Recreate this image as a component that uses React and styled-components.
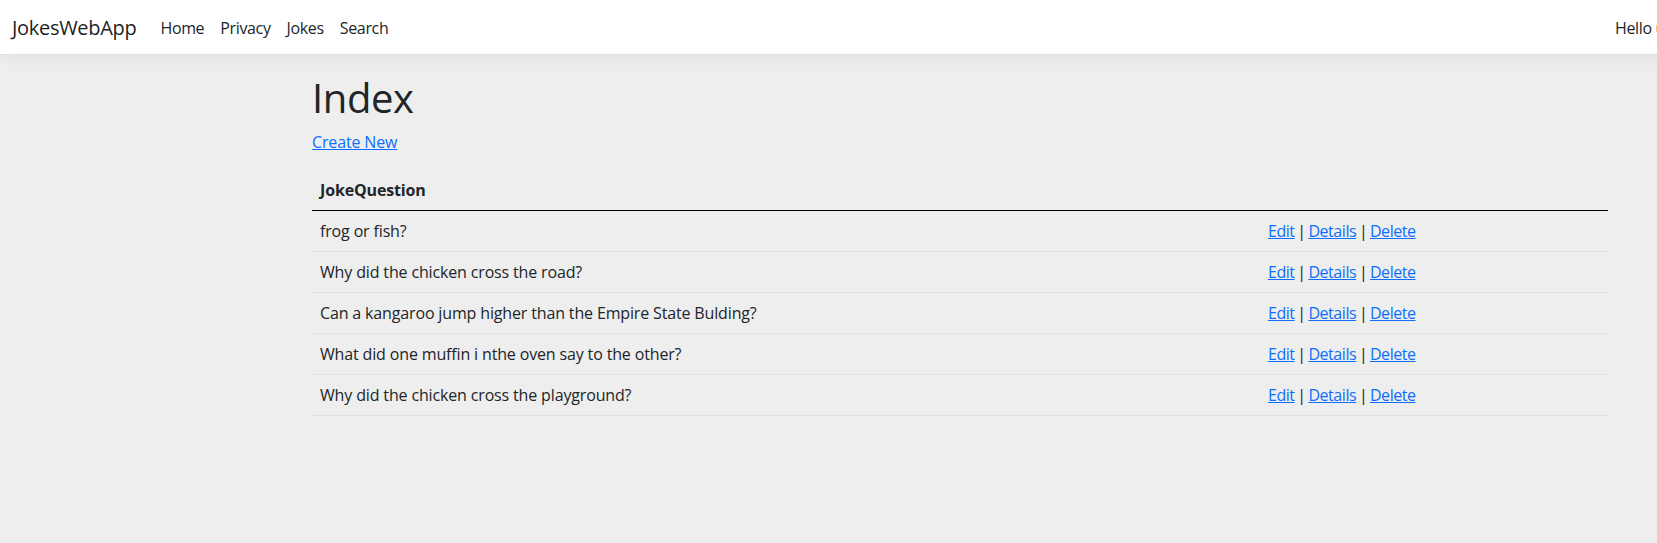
import React from "react";
import styled, { createGlobalStyle } from "styled-components";

const GlobalStyle = createGlobalStyle`
  *, *::before, *::after { box-sizing: border-box; }
  html { overflow: hidden; }
  body {
    margin: 0;
    min-width: 1920px;
    min-height: 543px;
    background: #eeeeee;
    color: #212529;
    font-family: "Open Sans", "Noto Sans", sans-serif;
    font-size: 16px;
    line-height: 1.5;
    letter-spacing: -0.15px;
  }
`;

const Navbar = styled.nav`
  background: #fff;
  border-bottom: 1px solid #dee2e6;
  box-shadow: 0 4px 12px rgba(0, 0, 0, 0.05);
  padding: 8px 0 6px;
  margin-bottom: 19px;
`;

const NavInner = styled.div`
  display: flex;
  align-items: center;
  padding: 0 12px;
`;

const Brand = styled.a`
  font-size: 20px;
  line-height: 30px;
  padding: 5px 0;
  margin-right: 16px;
  color: rgba(0, 0, 0, 0.9);
  text-decoration: none;
  letter-spacing: -0.3px;
`;

const NavList = styled.ul`
  display: flex;
  list-style: none;
  margin: 0;
  padding: 0;
  flex-grow: ${p => (p.$grow ? 1 : 0)};
  width: ${p => p.$width || "auto"};
`;

const NavLink = styled.a`
  display: block;
  padding: 8px;
  color: #212529;
  text-decoration: none;
  white-space: nowrap;
  letter-spacing: -0.35px;
`;

const Container = styled.div`
  max-width: 1320px;
  margin: 0 auto;
  padding: 0 12px;
`;

const Main = styled.main`
  padding-bottom: 16px;
`;

const Title = styled.h1`
  font-size: 40px;
  font-weight: 500;
  line-height: 1.2;
  margin: 0 0 8px;
  letter-spacing: -0.4px;
`;

const Para = styled.p`
  margin: 0 0 16px;
`;

const Link = styled.a`
  color: #0d6efd;
  text-decoration: underline;
`;

const Table = styled.table`
  width: 100%;
  border-collapse: collapse;
  margin-bottom: 16px;
  color: #212529;
`;

const HeadCell = styled.th`
  text-align: left;
  font-weight: 700;
  padding: 8px;
  border-bottom: 1px solid #000;
  width: ${p => p.$width || "auto"};
`;

const Cell = styled.td`
  padding: 8px;
  border-bottom: 1px solid #dee2e6;
`;

const ActionCell = styled(Cell)`
  letter-spacing: -0.45px;
  word-spacing: -1px;
`;

const Sep = styled.span`
  color: #212529;
`;

const jokes = [
  "frog or fish?",
  "Why did the chicken cross the road?",
  "Can a kangaroo jump higher than the Empire State Bulding?",
  "What did one muffin i nthe oven say to the other?",
  "Why did the chicken cross the playground?",
];

export default function App() {
  return (
    <>
      <GlobalStyle />
      <Navbar>
        <NavInner>
          <Brand href="#">JokesWebApp</Brand>
          <NavList $grow>
            <li><NavLink href="#">Home</NavLink></li>
            <li><NavLink href="#">Privacy</NavLink></li>
            <li><NavLink href="#">Jokes</NavLink></li>
            <li><NavLink href="#">Search</NavLink></li>
          </NavList>
          <NavList $width="301px">
            <li><NavLink href="#">Hello user@jokes.com!</NavLink></li>
            <li><NavLink href="#">Logout</NavLink></li>
          </NavList>
        </NavInner>
      </Navbar>
      <Container>
        <Main>
          <Title>Index</Title>
          <Para>
            <Link href="#">Create New</Link>
          </Para>
          <Table>
            <thead>
              <tr>
                <HeadCell $width="948px">JokeQuestion</HeadCell>
                <HeadCell />
              </tr>
            </thead>
            <tbody>
              {jokes.map((j, i) => (
                <tr key={i}>
                  <Cell>{j}</Cell>
                  <ActionCell>
                    <Link href="#">Edit</Link> <Sep>|</Sep>{" "}
                    <Link href="#">Details</Link> <Sep>|</Sep>{" "}
                    <Link href="#">Delete</Link>
                  </ActionCell>
                </tr>
              ))}
            </tbody>
          </Table>
        </Main>
      </Container>
    </>
  );
}
